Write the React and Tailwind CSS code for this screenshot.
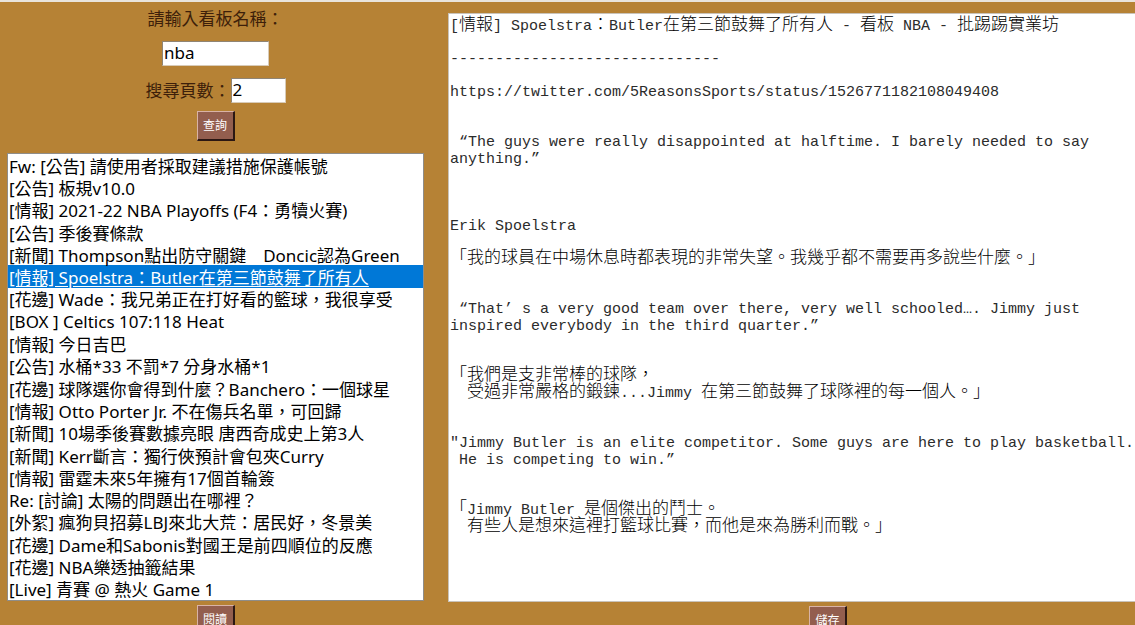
import { useState } from "react";

const POSTS = [
  "Fw: [公告] 請使用者採取建議措施保護帳號",
  "[公告] 板規v10.0",
  "[情報] 2021-22 NBA Playoffs (F4：勇犢火賽)",
  "[公告] 季後賽條款",
  "[新聞] Thompson點出防守關鍵　Doncic認為Green",
  "[情報] Spoelstra：Butler在第三節鼓舞了所有人",
  "[花邊] Wade：我兄弟正在打好看的籃球，我很享受",
  "[BOX ] Celtics 107:118 Heat",
  "[情報] 今日吉巴",
  "[公告] 水桶*33 不罰*7 分身水桶*1",
  "[花邊] 球隊選你會得到什麼？Banchero：一個球星",
  "[情報] Otto Porter Jr. 不在傷兵名單，可回歸",
  "[新聞] 10場季後賽數據亮眼 唐西奇成史上第3人",
  "[新聞] Kerr斷言：獨行俠預計會包夾Curry",
  "[情報] 雷霆未來5年擁有17個首輪簽",
  "Re: [討論] 太陽的問題出在哪裡？",
  "[外絮] 瘋狗貝招募LBJ來北大荒：居民好，冬景美",
  "[花邊] Dame和Sabonis對國王是前四順位的反應",
  "[花邊] NBA樂透抽籤結果",
  "[Live] 青賽 @ 熱火 Game 1",
];

// Number of blank lines above each block of the article.
const SPACE_ABOVE = {
  0: "",
  1: "mt-4",
  2: "mt-[33px]",
  3: "mt-[50px]",
};

const ARTICLE = [
  { above: 0, lines: ["[情報] Spoelstra：Butler在第三節鼓舞了所有人 - 看板 NBA - 批踢踢實業坊"] },
  { above: 1, lines: ["------------------------------"] },
  { above: 1, lines: ["https://twitter.com/5ReasonsSports/status/1526771182108049408"] },
  { above: 2, lines: [" “The guys were really disappointed at halftime. I barely needed to say", "anything.”"] },
  { above: 3, lines: ["Erik Spoelstra"] },
  { above: 1, lines: ["「我的球員在中場休息時都表現的非常失望。我幾乎都不需要再多說些什麼。」"] },
  { above: 2, lines: [" “That’ s a very good team over there, very well schooled…. Jimmy just", "inspired everybody in the third quarter.”"] },
  { above: 2, lines: ["「我們是支非常棒的球隊，", "　受過非常嚴格的鍛鍊...Jimmy 在第三節鼓舞了球隊裡的每一個人。」"] },
  { above: 2, lines: ["\"Jimmy Butler is an elite competitor. Some guys are here to play basketball.", " He is competing to win.”"] },
  { above: 2, lines: ["「Jimmy Butler 是個傑出的鬥士。", "　有些人是想來這裡打籃球比賽，而他是來為勝利而戰。」"] },
];

// Full-width characters are set larger than the fixed-pitch Latin text.
function Line({ text }) {
  const runs = text.match(/[\u3000-\u9fff\uff00-\uffef]+|[^\u3000-\u9fff\uff00-\uffef]+/g) || [];
  return (
    <p className="h-[17px] whitespace-pre">
      {runs.map((run, i) =>
        /[\u3000-\u9fff\uff00-\uffef]/.test(run) ? (
          <span key={i} className="font-['Noto_Sans_CJK_TC',sans-serif] text-[17px] leading-[0px] font-light text-black">
            {run}
          </span>
        ) : (
          <span key={i}>{run}</span>
        )
      )}
    </p>
  );
}

function RaisedButton({ children }) {
  return (
    <button
      type="button"
      className="h-[30px] w-[38px] shrink-0 border-t border-r-2 border-b-2 border-l border-t-[#d9b3a6] border-r-[#2b1712] border-b-[#2b1712] border-l-[#d9b3a6] bg-[#935e4e] text-xs leading-none text-white"
    >
      {children}
    </button>
  );
}

const FIELD = "h-[25px] border border-[#d8cbb8] border-t-[#8f8474] border-l-[#8f8474] bg-white px-px pb-[2px] text-[17px] text-black outline-none";

export default function App() {
  const [board, setBoard] = useState("nba");
  const [pages, setPages] = useState("2");
  const [selected, setSelected] = useState("5");

  return (
    <main className="flex h-screen gap-6 overflow-hidden border-t-2 border-[#e9e4dc] bg-[#b68235] pl-[7px] font-['Noto_Sans','Noto_Sans_CJK_TC',sans-serif] text-[#3d1f0a]">
      <section className="flex w-[417px] shrink-0 flex-col items-center">
        <label htmlFor="board" className="mt-[5px] text-[17px] leading-6">
          請輸入看板名稱：
        </label>
        <input
          id="board"
          value={board}
          onChange={(e) => setBoard(e.target.value)}
          className={`${FIELD} mt-[10px] w-[107px]`}
        />
        <div className="mt-3 flex items-center">
          <label htmlFor="pages" className="text-[17px] leading-6">
            搜尋頁數：
          </label>
          <input
            id="pages"
            value={pages}
            onChange={(e) => setPages(e.target.value)}
            className={`${FIELD} w-[55px]`}
          />
        </div>
        <div className="mt-2 mb-3 flex">
          <RaisedButton>查詢</RaisedButton>
        </div>
        <select
          size={20}
          aria-label="文章列表"
          value={selected}
          onChange={(e) => setSelected(e.target.value)}
          className="h-[448px] w-full shrink-0 overflow-hidden border border-[#8f8d89] bg-white p-0 text-[17px] text-black outline-none"
        >
          {POSTS.map((title, i) => (
            <option
              key={i}
              value={String(i)}
              className="flex h-[5%] min-h-0 items-center p-0 pl-px checked:bg-[linear-gradient(#0078d7,#0078d7)] checked:text-white checked:underline checked:underline-offset-2"
            >
              {title}
            </option>
          ))}
        </select>
        <div className="mt-1 flex">
          <RaisedButton>閱讀</RaisedButton>
        </div>
      </section>

      <section className="flex w-[760px] shrink-0 flex-col items-center pt-[11px]">
        <article className="h-[589px] w-full shrink-0 border border-[#c9c3ba] bg-white pt-1 pl-px font-['Liberation_Mono','Noto_Sans_CJK_TC',monospace] text-[15px] leading-[17px] text-[#2b2b2b]">
          {ARTICLE.map((block, i) => (
            <div key={i} className={SPACE_ABOVE[block.above]}>
              {block.lines.map((line, j) => (
                <Line key={j} text={line} />
              ))}
            </div>
          ))}
        </article>
        <div className="mt-1 flex">
          <RaisedButton>儲存</RaisedButton>
        </div>
      </section>
    </main>
  );
}
